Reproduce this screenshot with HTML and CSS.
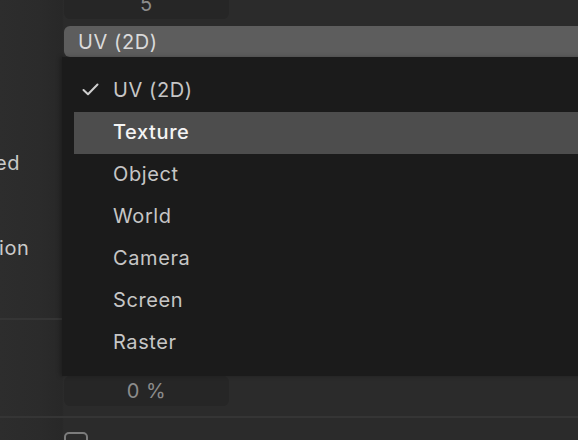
FILE: index.html
```html
<!DOCTYPE html>
<html>
<head>
<meta charset="utf-8">
<link rel="stylesheet" href="styles.css">
</head>
<body>
<div class="panel">
  <div class="row row-top">
    <div class="label"></div>
    <div class="field">5</div>
  </div>
  <div class="row row-select">
    <div class="label"></div>
    <div class="select">UV (2D)</div>
  </div>
  <div class="row row-a">
    <div class="label"><span class="clip-a">ed</span></div>
  </div>
  <div class="row row-b">
    <div class="label"><span class="clip-b">ion</span></div>
  </div>
  <div class="sep"></div>
  <div class="row row-pct">
    <div class="label"></div>
    <div class="field dim">0 %</div>
  </div>
  <div class="sep sep2"></div>
  <div class="row row-check">
    <div class="label"></div>
    <div class="checkbox"></div>
  </div>

  <div class="menu">
    <div class="item checked">
      <svg class="check" width="17" height="13" viewBox="0 0 17 13"><path d="M1.5 7 L6 11.3 L15.5 1.5" fill="none" stroke="#cfcfcf" stroke-width="2" stroke-linecap="round" stroke-linejoin="round"/></svg>
      <span>UV (2D)</span>
    </div>
    <div class="item active"><span>Texture</span></div>
    <div class="item"><span>Object</span></div>
    <div class="item"><span>World</span></div>
    <div class="item"><span>Camera</span></div>
    <div class="item"><span>Screen</span></div>
    <div class="item"><span>Raster</span></div>
  </div>
</div>
</body>
</html>
```

FILE: styles.css
```css
html, body {
  margin: 0;
  padding: 0;
  background: #2b2b2b;
  overflow: hidden;
}
body {
  width: 578px;
  height: 440px;
  font-family: Inter, "Noto Sans", sans-serif;
  font-size: 20px;
  letter-spacing: 0.6px;
  color: #c8c8c8;
}
.panel {
  position: relative;
  width: 578px;
  height: 440px;
  display: flex;
  flex-direction: column;
  background: linear-gradient(to right, #2d2d2d 0, #2b2b2b 40px, #282828 62px, #2b2b2b 64px);
}
.row {
  display: flex;
  align-items: center;
}
.label {
  width: 64px;
  flex: 0 0 64px;
  display: flex;
  justify-content: flex-start;
  overflow: hidden;
  white-space: nowrap;
  color: #cacaca;
}
.clip-a {
  margin-left: -5px;
}
.clip-b {
  margin-left: -1px;
}
.row-top {
  margin-top: -11px;
  height: 30px;
}
.field {
  width: 165px;
  height: 30px;
  background: #262626;
  border-radius: 6px;
  display: flex;
  align-items: center;
  justify-content: center;
  color: #8c8c8c;
}
.row-select {
  margin-top: 7px;
  height: 31px;
}
.select {
  flex: 1;
  height: 31px;
  margin-right: -10px;
  background: #5d5d5d;
  border-radius: 6px 0 0 6px;
  padding-left: 14px;
  display: flex;
  align-items: center;
  color: #dadada;
}
.row-a {
  margin-top: 94px;
  height: 24px;
}
.row-b {
  margin-top: 61px;
  height: 24px;
}
.sep {
  height: 2px;
  background: #353535;
  margin-top: 58px;
  flex: 0 0 auto;
}
.row-pct {
  margin-top: 56px;
  height: 30px;
}
.sep2 {
  margin-top: 10px;
}
.row-check {
  margin-top: 14px;
  height: 24px;
  align-items: flex-start;
}
.checkbox {
  width: 20px;
  height: 20px;
  border: 2px solid #7c7c7c;
  border-radius: 5px;
  flex: 0 0 auto;
}
.menu {
  position: absolute;
  left: 62px;
  top: 57px;
  width: 540px;
  background: #1b1b1b;
  padding: 13px 0 12px;
  box-shadow: -2px 0 4px rgba(0,0,0,0.25);
}
.item {
  position: relative;
  height: 40px;
  padding-bottom: 2px;
  padding-left: 51px;
  display: flex;
  align-items: center;
  color: #c6c6c6;
}
.item.active {
  margin-left: 12px;
  padding-left: 39px;
  background: #4d4d4d;
  color: #f4f4f4;
  font-weight: 500;
}
.check {
  position: absolute;
  left: 20px;
  top: 13px;
}
```
